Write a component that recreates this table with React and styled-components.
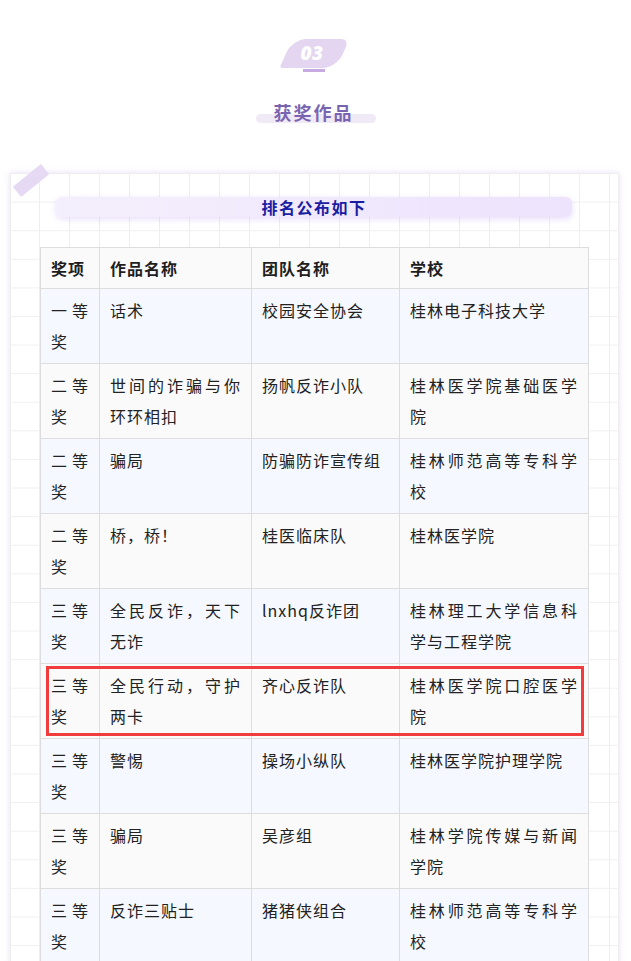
import React from "react";
import styled, { createGlobalStyle } from "styled-components";

const Global = createGlobalStyle`
  html, body { margin: 0; padding: 0; background: #ffffff; }
  body { font-family: "Noto Sans CJK SC", "Noto Sans", sans-serif; }
`;

const Page = styled.div`
  width: 631px;
  padding: 39px 0 40px;
  box-sizing: border-box;
`;

const Head = styled.header`
  display: flex;
  flex-direction: column;
  align-items: center;
`;

const Badge = styled.div`
  position: relative;
  width: 71px;
  height: 29px;
  display: flex;
  align-items: center;
  justify-content: center;
  margin-left: -3px;
  isolation: isolate;
  &::before {
    content: "";
    position: absolute;
    top: 0;
    bottom: 0;
    left: 7px;
    right: 7px;
    background: #e4d6f0;
    border-radius: 14px 8px 14px 3px;
    transform: skewX(-24deg);
    z-index: -1;
  }
`;

const BadgeNum = styled.span`
  color: #ffffff;
  font-family: "Open Sans", "Noto Sans", sans-serif;
  font-style: italic;
  font-weight: 800;
  font-size: 19px;
  line-height: 1;
  letter-spacing: 0.5px;
  margin-left: -4px;
`;

const Bar = styled.div`
  width: 22px;
  height: 3px;
  background: #c7abe2;
  margin-left: -3px;
  margin-top: 1px;
`;

const TitleWrap = styled.div`
  position: relative;
  isolation: isolate;
  margin-top: 30px;
  width: 120px;
  display: flex;
  justify-content: center;
  &::before {
    content: "";
    position: absolute;
    left: 0;
    right: 0;
    bottom: -1px;
    height: 9px;
    border-radius: 5px;
    background: #efeaf6;
    z-index: -1;
  }
`;

const Title = styled.h2`
  margin: 0 4px 0 0;
  font-size: 18px;
  line-height: 20px;
  font-weight: 700;
  color: #7a64b1;
  letter-spacing: 2px;
`;

const Card = styled.section`
  position: relative;
  margin: 51px 0 0 10px;
  width: 609px;
  box-sizing: border-box;
  border: 1px solid #eeeeee;
  background-color: #ffffff;
  background-image:
    linear-gradient(to right, transparent 28px, #eeeeee 28px, #eeeeee 29px, transparent 29px),
    linear-gradient(to bottom, transparent 28px, #f0f0f0 28px, #f0f0f0 29px, transparent 29px);
  background-size: 30px 28.6px;
  box-shadow: 0 0 6px rgba(205, 185, 240, 0.45);
  padding: 23px 30px 0 29px;
`;

const Tape = styled.div`
  position: absolute;
  left: 2px;
  top: 0px;
  width: 36px;
  height: 13px;
  background: #e6d9f3;
  transform: rotate(-39deg);
`;

const Banner = styled.div`
  margin: 0 16px;
  height: 20px;
  border-radius: 6px;
  background: linear-gradient(90deg, #f4effc, #ede3fd);
  box-shadow: 0 2px 6px rgba(190, 160, 240, 0.35);
  display: flex;
  align-items: center;
  justify-content: center;
`;

const BannerText = styled.h3`
  margin: 0;
  font-size: 16px;
  line-height: 20px;
  font-weight: 700;
  color: #1b1ea2;
  letter-spacing: 1.5px;
`;

const Table = styled.table`
  margin-top: 30px;
  width: 548px;
  table-layout: fixed;
  border-collapse: collapse;
  font-size: 16px;
  letter-spacing: 1px;
  color: #222222;
`;

const Th = styled.th`
  background: #fafafa;
  border: 1px solid #dddddd;
  padding: 5px 10px 4px;
  line-height: 31px;
  font-weight: 700;
  text-align: left;
  color: #1e1e1e;
`;

const Row = styled.tr`
  position: relative;
  background: ${(p) => (p.$odd ? "#f5f8fe" : "#fafafa")};
  ${(p) =>
    p.$mark &&
    `
    &::after {
      content: "";
      position: absolute;
      left: 5px;
      right: 5px;
      top: 2px;
      bottom: 3px;
      border: 3px solid #f03c3c;
      pointer-events: none;
    }
  `}
`;

const Td = styled.td`
  border: 1px solid #dddddd;
  padding: 6px 10px;
  line-height: 31px;
  vertical-align: top;
  text-align: justify;
  word-break: break-all;
`;

const rows = [
  ["一等奖", "话术", "校园安全协会", "桂林电子科技大学"],
  ["二等奖", "世间的诈骗与你环环相扣", "扬帆反诈小队", "桂林医学院基础医学院"],
  ["二等奖", "骗局", "防骗防诈宣传组", "桂林师范高等专科学校"],
  ["二等奖", "桥，桥！", "桂医临床队", "桂林医学院"],
  ["三等奖", "全民反诈，天下无诈", "lnxhq反诈团", "桂林理工大学信息科学与工程学院"],
  ["三等奖", "全民行动，守护两卡", "齐心反诈队", "桂林医学院口腔医学院"],
  ["三等奖", "警惕", "操场小纵队", "桂林医学院护理学院"],
  ["三等奖", "骗局", "吴彦组", "桂林学院传媒与新闻学院"],
  ["三等奖", "反诈三贴士", "猪猪侠组合", "桂林师范高等专科学校"],
];

export default function App() {
  return (
    <Page>
      <Global />
      <Head>
        <Badge>
          <BadgeNum>03</BadgeNum>
        </Badge>
        <Bar />
        <TitleWrap>
          <Title>获奖作品</Title>
        </TitleWrap>
      </Head>
      <Card>
        <Tape />
        <Banner>
          <BannerText>排名公布如下</BannerText>
        </Banner>
        <Table>
          <colgroup>
            <col style={{ width: 59 }} />
            <col style={{ width: 152 }} />
            <col style={{ width: 148 }} />
            <col style={{ width: 189 }} />
          </colgroup>
          <thead>
            <tr>
              <Th>奖项</Th>
              <Th>作品名称</Th>
              <Th>团队名称</Th>
              <Th>学校</Th>
            </tr>
          </thead>
          <tbody>
            {rows.map((r, i) => (
              <Row key={i} $odd={i % 2 === 0} $mark={i === 5}>
                {r.map((c, j) => (
                  <Td key={j}>{c}</Td>
                ))}
              </Row>
            ))}
          </tbody>
        </Table>
      </Card>
    </Page>
  );
}
